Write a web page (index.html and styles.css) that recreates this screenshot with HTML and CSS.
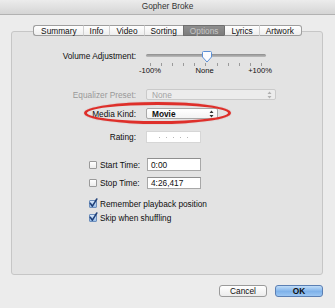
FILE: index.html
```html
<!DOCTYPE html>
<html lang="en">
  <head>
    <meta charset="utf-8" />
    <title>Gopher Broke</title>
    <link rel="stylesheet" href="styles.css">
  </head>
  <body>
    <div class="win">
      <!-- Title bar -->
      <div class="win__title">Gopher Broke</div>

      <div class="win__body">
        <!-- Tabs -->
        <nav class="tabs">
          <span class="tabs__tab">Summary</span>
          <span class="tabs__tab">Info</span>
          <span class="tabs__tab">Video</span>
          <span class="tabs__tab">Sorting</span>
          <span class="tabs__tab tabs__tab--on">Options</span>
          <span class="tabs__tab">Lyrics</span>
          <span class="tabs__tab">Artwork</span>
        </nav>

        <!-- Options panel -->
        <section class="panel">
          <div class="row row--volume">
            <div class="row__label">Volume Adjustment:</div>
            <div class="slider">
              <div class="slider__track"></div>
              <svg class="slider__knob" width="12" height="12" viewBox="0 0 12 12">
                <path d="M1.5 1.5 Q1.5 0.5 2.5 0.5 L9.5 0.5 Q10.5 0.5 10.5 1.5 L10.5 6 L6 11 L1.5 6 Z" fill="#fbfcfe" stroke="#5b8fd6" stroke-width="1"/>
              </svg>
              <div class="slider__ticks">
                <i></i><i></i><i></i><i></i><i></i><i></i><i></i><i></i><i></i><i></i><i></i>
              </div>
              <div class="slider__labels">
                <span>-100%</span><span>None</span><span>+100%</span>
              </div>
            </div>
          </div>

          <div class="row row--eq">
            <div class="row__label row__label--off">Equalizer Preset:</div>
            <div class="popup popup--off popup--wide">
              <span>None</span>
              <svg class="popup__arrows" width="5" height="8" viewBox="0 0 5 8"><path d="M2.5 0.5 L4.5 3 L0.5 3 Z M0.5 5 L4.5 5 L2.5 7.5 Z" fill="#b0b0b0"/></svg>
            </div>
          </div>

          <div class="row row--kind">
            <div class="row__label">Media Kind:</div>
            <div class="popup popup--kind">
              <span>Movie</span>
              <svg class="popup__arrows" width="5" height="8" viewBox="0 0 5 8"><path d="M2.5 0.5 L4.5 3 L0.5 3 Z M0.5 5 L4.5 5 L2.5 7.5 Z" fill="#333"/></svg>
            </div>
            <div class="mark"></div>
          </div>

          <div class="row row--rating">
            <div class="row__label">Rating:</div>
            <div class="rating"><i></i><i></i><i></i><i></i><i></i></div>
          </div>

          <div class="row row--start">
            <label class="row__check"><span class="box"></span>Start Time:</label>
            <div class="field">0:00</div>
          </div>

          <div class="row row--stop">
            <label class="row__check"><span class="box"></span>Stop Time:</label>
            <div class="field">4:26,417</div>
          </div>

          <div class="row row--remember">
            <label class="row__check">
              <span class="box box--on">
                <svg class="box__tick" width="9" height="10" viewBox="0 0 9 10"><path d="M1.3 5.2 L3.4 8.2 L7.8 1" fill="none" stroke="#1e3f78" stroke-width="1.5" stroke-linecap="round" stroke-linejoin="round"/></svg>
              </span>Remember playback position</label>
          </div>

          <div class="row row--skip">
            <label class="row__check">
              <span class="box box--on">
                <svg class="box__tick" width="9" height="10" viewBox="0 0 9 10"><path d="M1.3 5.2 L3.4 8.2 L7.8 1" fill="none" stroke="#1e3f78" stroke-width="1.5" stroke-linecap="round" stroke-linejoin="round"/></svg>
              </span>Skip when shuffling</label>
          </div>
        </section>

        <!-- Buttons -->
        <div class="actions">
          <button class="btn">Cancel</button>
          <button class="btn btn--ok">OK</button>
        </div>
      </div>
    </div>
  </body>
</html>
```

FILE: styles.css
```css
/* Base */
html { box-sizing: border-box; }
*, *:before, *:after { box-sizing: inherit; }
body {
  margin: 0;
  font-family: "Liberation Sans", Arial, sans-serif;
  font-size: 8.3px;
  color: #0e0e0e;
  background: #ececec;
}
/* Window */
.win {
  width: 335px;
  height: 308px;
  background: #ececec;
  overflow: hidden;
}
.win__title {
  height: 15px;
  line-height: 13px;
  text-align: center;
  color: #333;
  background: linear-gradient(#ececec, #d5d5d5);
  border-bottom: 1px solid #b2b2b2;
}
.win__body {
  padding: 10px 12px 0 11px;
}
/* Tabs */
.tabs {
  position: relative;
  z-index: 1;
  display: flex;
  justify-content: center;
  height: 11px;
  margin-left: 1px;
}
.tabs__tab {
  height: 11px;
  line-height: 10px;
  padding: 0 6px;
  background: linear-gradient(#ffffff, #eeeeee);
  border-top: 1px solid #9e9e9e;
  border-bottom: 1px solid #9e9e9e;
  border-left: 1px solid #d0d0d0;
}
.tabs__tab:first-child {
  border-left: 1px solid #9e9e9e;
  border-radius: 3px 0 0 3px;
  padding-left: 7px;
}
.tabs__tab:last-child {
  border-right: 1px solid #9e9e9e;
  border-radius: 0 3px 3px 0;
  padding-right: 7px;
}
.tabs__tab--on {
  background: linear-gradient(#8e8e8e, #7c7c7c);
  color: #c6c6c6;
  border-top-color: #6f6f6f;
  border-bottom-color: #6f6f6f;
  border-left-color: #6f6f6f;
}
.tabs__tab--on + .tabs__tab { border-left-color: #6f6f6f; }
/* Panel */
.panel {
  margin-top: -5px;
  height: 244px;
  background: #e3e3e3;
  border: 1px solid #c6c6c6;
  border-radius: 3px;
  padding-top: 18px;
}
.row {
  position: relative;
  display: flex;
  align-items: center;
}
.row__label {
  width: 125px;
  padding-right: 1px;
  text-align: right;
  margin-right: 9px;
}
.row__label--off { color: #999; }
.row__check {
  display: flex;
  align-items: center;
  padding-left: 77px;
  width: 134px;
  white-space: nowrap;
}
.row--volume { align-items: flex-start; }
.row--volume .row__label { line-height: 12px; }
.row--eq { margin-top: 15px; }
.row--kind { margin-top: 8px; }
.row--rating { margin-top: 12px; }
.row--start { margin-top: 15px; }
.row--stop { margin-top: 6px; }
.row--remember { margin-top: 9px; height: 12px; }
.row--skip { margin-top: 2px; height: 12px; }
.row--start .field { margin-left: 1px; }
.row--stop .field { margin-left: 1px; }
/* Slider */
.slider {
  position: relative;
  width: 120px;
  height: 24px;
}
.slider__track {
  margin-top: 4px;
  height: 3px;
  border-radius: 2px;
  background: linear-gradient(#8d8d8d, #bdbdbd);
}
.slider__knob {
  position: absolute;
  left: 55px;
  top: 1px;
}
.slider__ticks {
  display: flex;
  justify-content: space-between;
  margin: 6px 4px 0 4px;
  height: 3px;
}
.slider__ticks i {
  width: 1px;
  height: 3px;
  background: #9a9a9a;
}
.slider__labels {
  display: flex;
  justify-content: space-between;
  margin: 1px -6px 0 -7px;
  font-size: 7.6px;
  line-height: 8px;
}
/* Popups */
.popup {
  display: flex;
  align-items: center;
  justify-content: space-between;
  height: 11px;
  padding: 0 3px 0 5px;
  background: linear-gradient(#ffffff, #f3f3f3);
  border: 1px solid #a9a9a9;
  border-radius: 2px;
  font-weight: bold;
}
.popup--wide { width: 130px; }
.popup--kind { width: 72px; }
.popup--off {
  font-weight: normal;
  color: #a3a3a3;
  background: #ececec;
  border-color: #cacaca;
}
.popup__arrows { display: block; }
/* Annotation ring */
.mark {
  position: absolute;
  left: 72px;
  top: -6px;
  width: 147px;
  height: 22px;
  border: 3px solid #de2f2a;
  border-radius: 50%;
  box-shadow: 0 0 1px rgba(200, 30, 30, 0.6);
  pointer-events: none;
}
/* Rating */
.rating {
  display: flex;
  align-items: center;
  gap: 6px;
  width: 55px;
  height: 12px;
  padding-left: 12px;
  background: #fff;
  border: 1px solid #d6d6d6;
}
.rating i {
  width: 1px;
  height: 1px;
  background: #b8b8b8;
}
/* Fields */
.field {
  width: 54px;
  height: 12px;
  line-height: 11px;
  padding-left: 3px;
  background: #fff;
  border: 1px solid #a8a8a8;
  border-top-color: #8f8f8f;
}
.row--start .field { height: 13px; line-height: 12px; }
/* Checkboxes */
.box {
  position: relative;
  flex: none;
  width: 8px;
  height: 8px;
  margin-right: 3px;
  background: linear-gradient(#ffffff, #ececec);
  border: 1px solid #9a9a9a;
  border-radius: 1px;
}
.box--on {
  background: linear-gradient(#d6e6f8, #9cc1ea);
  border-color: #6d8fbd;
}
.box__tick {
  position: absolute;
  left: -1px;
  top: -3px;
}
/* Buttons */
.actions {
  display: flex;
  justify-content: flex-end;
  gap: 8px;
  margin-top: 10px;
}
.btn {
  width: 48px;
  height: 12px;
  padding: 0;
  font-family: inherit;
  font-size: 8.3px;
  line-height: 10px;
  color: #0e0e0e;
  background: linear-gradient(#ffffff, #ececec);
  border: 1px solid #9a9a9a;
  border-radius: 3px;
}
.btn--ok {
  font-weight: bold;
  background: linear-gradient(#bfdcf8, #7fb2ea 55%, #9cc6f2);
  border-color: #5b7fb3;
}
```
